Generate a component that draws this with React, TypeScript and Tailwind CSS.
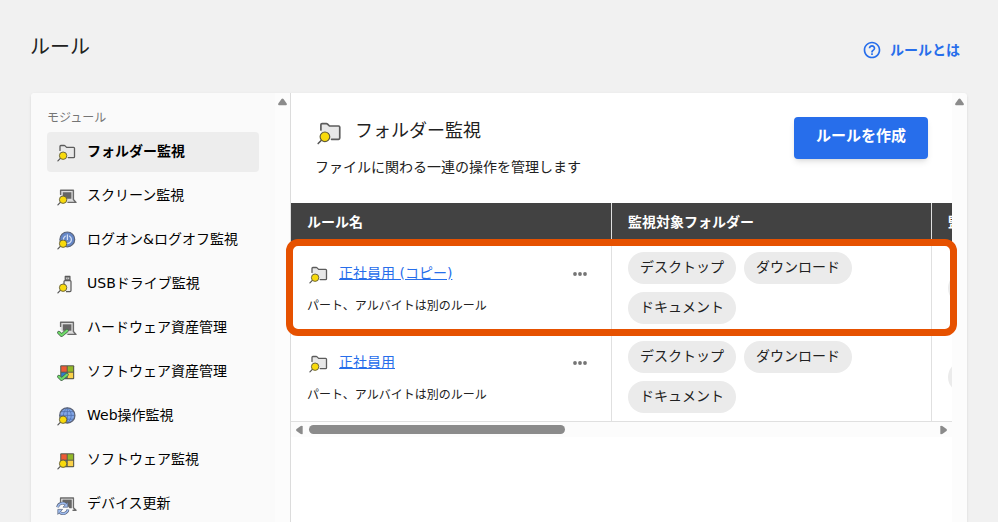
import type { ReactNode } from "react";

const modules = [
  { label: "フォルダー監視", icon: FolderIcon },
  { label: "スクリーン監視", icon: ScreenIcon },
  { label: "ログオン&ログオフ監視", icon: LogonIcon },
  { label: "USBドライブ監視", icon: UsbIcon },
  { label: "ハードウェア資産管理", icon: HardwareIcon },
  { label: "ソフトウェア資産管理", icon: SoftwareAssetIcon },
  { label: "Web操作監視", icon: WebIcon },
  { label: "ソフトウェア監視", icon: SoftwareIcon },
  { label: "デバイス更新", icon: DeviceUpdateIcon },
];

const rules = [
  {
    name: "正社員用 (コピー)",
    desc: "パート、アルバイトは別のルール",
    folders: ["デスクトップ", "ダウンロード", "ドキュメント"],
  },
  {
    name: "正社員用",
    desc: "パート、アルバイトは別のルール",
    folders: ["デスクトップ", "ダウンロード", "ドキュメント"],
  },
];

function Icon({ className = "size-5", children }: { className?: string; children: ReactNode }) {
  return (
    <svg viewBox="0 0 20 20" fill="none" aria-hidden="true" className={`${className} shrink-0 overflow-visible`}>
      {children}
    </svg>
  );
}

function Lens() {
  return (
    <>
      <path d="M3.6 16.2.9 18.9" stroke="#555" strokeWidth="1.2" strokeLinecap="round" />
      <circle cx="6.1" cy="13.7" r="3.7" fill="#f8da0c" stroke="#5f5a3c" strokeWidth=".9" />
    </>
  );
}

function Check() {
  return (
    <>
      <path d="m1.8 14.6 2.8 2.6 5.4-4.6" stroke="#44604a" strokeWidth="3.4" strokeLinecap="round" strokeLinejoin="round" />
      <path d="m1.8 14.6 2.8 2.6 5.4-4.6" stroke="#6fdc68" strokeWidth="2.1" strokeLinecap="round" strokeLinejoin="round" />
    </>
  );
}

function Laptop() {
  return (
    <>
      <path d="M3.6 10V4.3h12.8v9.3l2.6 2.8H8.8L3.6 12z" fill="#dcdcdc" />
      <path
        d="M3.6 8.4V4.3h12.8v9.3l2.6 2.8h-8"
        stroke="#6a6a6a"
        strokeWidth="1.4"
        strokeLinejoin="round"
        strokeLinecap="round"
      />
      <path d="M5.8 6.3h8.6v6.4H5.8z" fill="#666" />
    </>
  );
}

function Tiles() {
  return (
    <>
      <rect x="3.2" y="3.2" width="14" height="14" rx="1" fill="#5a5a4a" />
      <path d="M4.3 4.3h5.4v5.4H4.3z" fill="#ee5a34" />
      <path d="M10.7 4.3h5.4v5.4h-5.4z" fill="#92b828" />
      <path d="M4.3 10.7h5.4v5.4H4.3z" fill="#2f7fc4" />
      <path d="M10.7 10.7h5.4v5.4h-5.4z" fill="#fbd24a" />
    </>
  );
}

function FolderIcon({ className }: { className?: string }) {
  return (
    <Icon className={className}>
      <path
        d="M3 9.6V4.4q0-.9.9-.9h3.3q.5 0 .9.4L9.6 5.4h7q.9 0 .9.9v8.4q0 .9-.9.9h-6.2L6 12z"
        fill="#e8e8e8"
      />
      <path
        d="M3 8.4v-4q0-.9.9-.9h3.3q.5 0 .9.4L9.6 5.4h7q.9 0 .9.9v8.4q0 .9-.9.9h-5.4"
        stroke="#5c5c5c"
        strokeWidth="1.3"
        strokeLinejoin="round"
        strokeLinecap="round"
      />
      <Lens />
    </Icon>
  );
}

function ScreenIcon() {
  return (
    <Icon>
      <Laptop />
      <Lens />
    </Icon>
  );
}

function LogonIcon() {
  return (
    <Icon>
      <circle cx="10.3" cy="9.4" r="7.4" fill="#6486c6" stroke="#5c6478" strokeWidth="1.2" />
      <path d="M8.2 6.2a4 4 0 1 0 4.4 0M10.4 4.8v4.6" stroke="#d3dff5" strokeWidth="1.3" strokeLinecap="round" />
      <Lens />
    </Icon>
  );
}

function UsbIcon() {
  return (
    <Icon>
      <path d="M8.2 2.4h4.8v4H8.2z" fill="#8a8a8a" stroke="#5a5a5a" strokeWidth="1.1" strokeLinejoin="round" />
      <path d="M9.2 3.8h1v1.2h-1zm1.9 0h1v1.2h-1z" fill="#d0d0d0" />
      <path
        d="M7 10V7.6q0-1 1-1h5q1 0 1 1v9q0 1-1 1H9"
        fill="#ececec"
        stroke="#5a5a5a"
        strokeWidth="1.2"
        strokeLinejoin="round"
      />
      <Lens />
    </Icon>
  );
}

function HardwareIcon() {
  return (
    <Icon>
      <Laptop />
      <Check />
    </Icon>
  );
}

function SoftwareAssetIcon() {
  return (
    <Icon>
      <Tiles />
      <Check />
    </Icon>
  );
}

function WebIcon() {
  return (
    <Icon>
      <circle cx="10.3" cy="9.4" r="7.6" fill="#82a6e6" />
      <path
        d="M10.3 1.8V17M2.7 9.4h15.2M4 5.6h12.6M4 13.2h12.6M10.3 1.8c-5.2 4.6-5.2 10.6 0 15.2M10.3 1.8c5.2 4.6 5.2 10.6 0 15.2"
        stroke="#4f70ae"
        strokeWidth=".8"
      />
      <circle cx="10.3" cy="9.4" r="7.6" stroke="#5c6478" strokeWidth="1.3" />
      <Lens />
    </Icon>
  );
}

function SoftwareIcon() {
  return (
    <Icon>
      <Tiles />
      <Lens />
    </Icon>
  );
}

function DeviceUpdateIcon() {
  return (
    <Icon>
      <path d="M3.6 8V4h12.8v9.8l2.6 2.4h-3" stroke="#6a6a6a" strokeWidth="1.4" strokeLinejoin="round" strokeLinecap="round" />
      <path d="M5.4 5.6h9.4v8.6h-2.4L9 9.4H5.4z" fill="#666" />
      <path d="M.6 13.2a5 5 0 0 1 8.2-2.8M11 15.6a5 5 0 0 1-8.2 2.8" stroke="#56617a" strokeWidth="2.8" />
      <path d="M10.8 8.2v5H6zM.8 20.4v-5h4.8z" fill="#9dbbee" stroke="#56617a" strokeWidth=".7" strokeLinejoin="round" />
      <path d="M.6 13.2a5 5 0 0 1 8.2-2.8M11 15.6a5 5 0 0 1-8.2 2.8" stroke="#9dbbee" strokeWidth="1.6" />
    </Icon>
  );
}

function HelpIcon() {
  return (
    <svg viewBox="0 0 24 24" fill="currentColor" aria-hidden="true" className="size-5">
      <path d="M11 18h2v-2h-2v2zm1-16C6.48 2 2 6.48 2 12s4.48 10 10 10 10-4.48 10-10S17.52 2 12 2zm0 18c-4.41 0-8-3.59-8-8s3.59-8 8-8 8 3.59 8 8-3.59 8-8 8zm0-14c-2.21 0-4 1.79-4 4h2c0-1.1.9-2 2-2s2 .9 2 2c0 2-3 1.75-3 5h2c0-2.25 3-2.5 3-5 0-2.21-1.79-4-4-4z" />
    </svg>
  );
}

function Arrow({ className = "" }: { className?: string }) {
  return (
    <svg viewBox="0 0 9 8" aria-hidden="true" className={`h-2 w-[9px] shrink-0 ${className}`}>
      <path d="M3.5 1q1-1 2 0L8.7 5.6Q9.2 7.2 8 7.2H1Q-.2 7.2.3 5.6z" fill="#8b8b8b" />
    </svg>
  );
}

// Vertical track: only the upper arrow is in view
function VerticalTrack() {
  return (
    <div className="flex w-[15px] shrink-0 justify-center bg-[#fcfcfc] pt-[5px]">
      <Arrow />
    </div>
  );
}

function Chip({ children }: { children: ReactNode }) {
  return (
    <span className="flex h-8 shrink-0 items-center whitespace-nowrap rounded-full bg-[#ebebeb] px-3 pb-0.5 text-sm">
      {children}
    </span>
  );
}

function Sidebar() {
  return (
    <div className="flex w-[260px] shrink-0 border-r border-[#dcdcdc] bg-[#fafafa]">
      <nav aria-label="モジュール" className="min-w-0 flex-1 overflow-hidden px-4 pt-4">
        <h2 className="mb-1 text-xs leading-[19px] text-[#757575]">モジュール</h2>
        <ul className="flex flex-col gap-1">
          {modules.map((m, i) => (
            <li key={m.label}>
              <a
                href="#"
                aria-current={i === 0 ? "page" : undefined}
                className={`flex h-10 items-center gap-2.5 rounded-sm pl-2.5 text-sm text-black ${
                  i === 0 ? "bg-[#ededed] font-bold" : ""
                }`}
              >
                <m.icon />
                <span className="whitespace-nowrap pb-0.5">{m.label}</span>
              </a>
            </li>
          ))}
        </ul>
      </nav>
      <VerticalTrack />
    </div>
  );
}

function RuleTable() {
  return (
    <div className="relative">
      <div className="overflow-hidden">
        <table className="w-[961px] table-fixed border-separate border-spacing-0 text-left">
          <colgroup>
            <col className="w-[321px]" />
            <col className="w-[320px]" />
            <col className="w-[320px]" />
          </colgroup>
          <thead>
            <tr className="h-[41px] bg-[#424242] text-sm text-white">
              <th className="border-r border-[#e0e0e0] px-4 pb-1 font-bold">ルール名</th>
              <th className="border-r border-[#e0e0e0] px-4 pb-1 font-bold">監視対象フォルダー</th>
              <th className="px-4 pb-1 font-bold">監視</th>
            </tr>
          </thead>
          <tbody>
            {rules.map((r) => (
              <tr key={r.name}>
                <td className="border-r border-b border-[#e0e0e0] px-4 py-2">
                  <div className="flex items-center gap-2.5 pl-0.5">
                    <FolderIcon />
                    <a href="#" className="flex-1 pb-0.5 text-sm text-[#276eeb] underline">
                      {r.name}
                    </a>
                    <button type="button" aria-label="メニュー" className="mr-[7px] flex h-6 w-4 items-center justify-center">
                      <svg viewBox="0 0 16 4" fill="#757575" className="h-1 w-4">
                        <circle cx="3" cy="2" r="1.9" />
                        <circle cx="8" cy="2" r="1.9" />
                        <circle cx="13" cy="2" r="1.9" />
                      </svg>
                    </button>
                  </div>
                  <p className="mt-3 text-xs">{r.desc}</p>
                </td>
                <td className="border-r border-b border-[#e0e0e0] px-4 py-2">
                  <div className="flex flex-wrap gap-2">
                    {r.folders.map((f) => (
                      <Chip key={f}>{f}</Chip>
                    ))}
                  </div>
                </td>
                <td className="border-b border-[#e0e0e0] px-4 py-2">
                  <div className="flex">
                    <Chip>有効</Chip>
                  </div>
                </td>
              </tr>
            ))}
          </tbody>
        </table>
        <div className="flex h-[15px] items-center bg-[#fcfcfc] px-1">
          <Arrow className="-rotate-90" />
          <div className="mx-[5px] flex-1">
            <div className="h-[9px] w-[41%] rounded-full bg-[#8b8b8b]" />
          </div>
          <Arrow className="rotate-90" />
        </div>
      </div>
      {/* frame around the copied rule */}
      <div className="pointer-events-none absolute -inset-x-[5px] top-9 h-[97px] rounded-xl border-[7px] border-[#e65100]" />
    </div>
  );
}

export default function App() {
  return (
    <div className="flex h-screen flex-col overflow-hidden bg-[#f1f1f1] font-['DejaVu_Sans','Noto_Sans_CJK_JP',sans-serif] text-[#212121]">
      <header className="flex h-[93px] shrink-0 items-center justify-between pr-[38px] pl-[30px]">
        <h1 className="text-xl">ルール</h1>
        <a href="#" className="flex items-center gap-2 pt-1.5 text-sm font-bold text-[#276eeb]">
          <HelpIcon />
          ルールとは
        </a>
      </header>

      <div className="mx-[31px] flex min-h-0 flex-1 overflow-hidden rounded-t bg-white shadow">
        <Sidebar />
        <main className="min-w-0 flex-1">
          <div className="flex h-[110px] items-start justify-between pt-6 pr-6 pl-6">
            <div>
              <div className="flex items-center gap-3">
                <FolderIcon className="ml-0.5 size-[26px]" />
                <h2 className="pb-0.5 text-lg">フォルダー監視</h2>
              </div>
              <p className="mt-2.5 text-sm">ファイルに関わる一連の操作を管理します</p>
            </div>
            <button
              type="button"
              className="h-[42px] rounded bg-[#276eeb] px-[22px] pb-1 text-[15px] font-bold text-white shadow-md"
            >
              ルールを作成
            </button>
          </div>
          <RuleTable />
        </main>
        <VerticalTrack />
      </div>
    </div>
  );
}
